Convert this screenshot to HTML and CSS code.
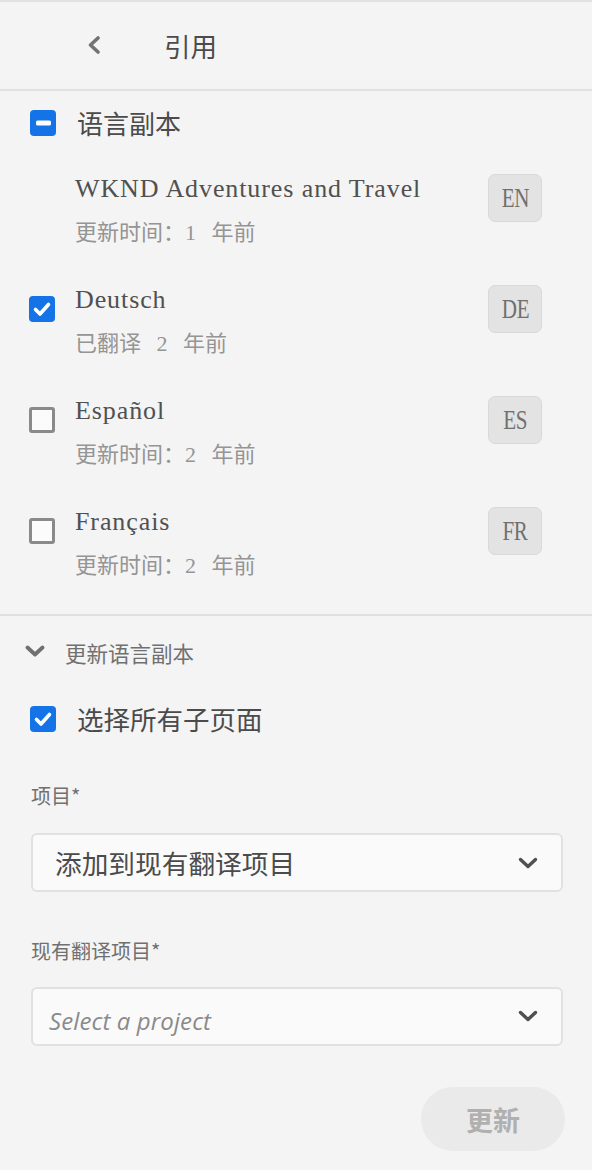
FILE: index.html
```html
<!DOCTYPE html>
<html lang="zh">
<head>
<meta charset="utf-8">
<title>引用</title>
<link rel="stylesheet" href="styles.css">
</head>
<body>
<div class="panel">
  <header class="header">
    <button class="back" aria-label="返回">
      <svg width="16" height="18" viewBox="0 0 16 18"><path d="M12 2 L4.5 9 L12 16" fill="none" stroke="#737373" stroke-width="3.6" stroke-linecap="round" stroke-linejoin="round"/></svg>
    </button>
    <h1 class="title">引用</h1>
  </header>

  <section class="copies">
    <div class="group-head">
      <span class="cb cb-on"><svg width="26" height="26" viewBox="0 0 26 26"><rect x="6" y="10.5" width="15" height="5" rx="1.5" fill="#fff"/></svg></span>
      <span class="group-title">语言副本</span>
    </div>
    <ul class="list">
      <li class="row">
        <span class="slot"></span>
        <div class="info"><div class="name">WKND Adventures and Travel</div><div class="meta">更新时间：1 年前</div></div>
        <span class="badge"><span>EN</span></span>
      </li>
      <li class="row">
        <span class="slot"><span class="cb cb-on"><svg width="26" height="26" viewBox="0 0 26 26"><path d="M6.5 13.5 L11 18 L19.5 8.5" fill="none" stroke="#fff" stroke-width="3.6" stroke-linecap="round" stroke-linejoin="round"/></svg></span></span>
        <div class="info"><div class="name">Deutsch</div><div class="meta">已翻译 2 年前</div></div>
        <span class="badge"><span>DE</span></span>
      </li>
      <li class="row">
        <span class="slot"><span class="cb cb-off"></span></span>
        <div class="info"><div class="name">Español</div><div class="meta">更新时间：2 年前</div></div>
        <span class="badge"><span>ES</span></span>
      </li>
      <li class="row">
        <span class="slot"><span class="cb cb-off"></span></span>
        <div class="info"><div class="name">Français</div><div class="meta">更新时间：2 年前</div></div>
        <span class="badge"><span>FR</span></span>
      </li>
    </ul>
  </section>

  <section class="update">
    <div class="toggle">
      <svg width="20" height="12" viewBox="0 0 20 12"><path d="M2.5 2.5 L10 9.5 L17.5 2.5" fill="none" stroke="#707070" stroke-width="3.8" stroke-linecap="round" stroke-linejoin="round"/></svg>
      <span>更新语言副本</span>
    </div>
    <div class="select-all">
      <span class="cb cb-on"><svg width="26" height="26" viewBox="0 0 26 26"><path d="M6.5 13.5 L11 18 L19.5 8.5" fill="none" stroke="#fff" stroke-width="3.6" stroke-linecap="round" stroke-linejoin="round"/></svg></span>
      <span class="select-all-text">选择所有子页面</span>
    </div>

    <div class="field">
      <div class="label">项目*</div>
      <div class="dropdown">
        <span class="value">添加到现有翻译项目</span>
        <svg class="caret" width="20" height="12" viewBox="0 0 20 12"><path d="M2.5 2.5 L10 9.5 L17.5 2.5" fill="none" stroke="#505050" stroke-width="3.4" stroke-linecap="round" stroke-linejoin="round"/></svg>
      </div>
    </div>

    <div class="field field-2">
      <div class="label">现有翻译项目*</div>
      <div class="dropdown dropdown-placeholder">
        <span class="placeholder">Select a project</span>
        <svg class="caret" width="20" height="12" viewBox="0 0 20 12"><path d="M2.5 2.5 L10 9.5 L17.5 2.5" fill="none" stroke="#505050" stroke-width="3.4" stroke-linecap="round" stroke-linejoin="round"/></svg>
      </div>
    </div>

    <div class="actions">
      <button class="btn-update" disabled>更新</button>
    </div>
  </section>
</div>
</body>
</html>
```

FILE: styles.css
```css
* { box-sizing: border-box; }

html, body {
  margin: 0;
  padding: 0;
  background: #f4f4f4;
}

body {
  font-family: "Noto Sans CJK SC", "Noto Sans", sans-serif;
  color: #4b4b4b;
}

.panel {
  width: 592px;
  min-height: 1170px;
  border-top: 2px solid #e2e2e2;
}

.header {
  height: 89px;
  display: flex;
  align-items: center;
  padding-left: 86px;
  border-bottom: 2px solid #e1e1e1;
}

.back {
  background: none;
  border: 0;
  padding: 0;
  width: 16px;
  height: 18px;
  display: flex;
  margin-right: 62px;
  margin-top: -2px;
}

.title {
  margin: 0;
  font-size: 26.5px;
  font-weight: 400;
  color: #4b4b4b;
  line-height: 30px;
}

.copies {
  padding-top: 19px;
  padding-bottom: 4px;
  border-bottom: 2px solid #e0e0e0;
}

.group-head {
  display: flex;
  align-items: center;
  height: 26px;
  padding-left: 30px;
}

.group-title {
  margin-left: 21px;
  font-size: 26px;
  line-height: 30px;
  color: #4b4b4b;
}

.cb {
  width: 26px;
  height: 26px;
  border-radius: 4px;
  display: inline-flex;
  flex: none;
}

.cb-on {
  background: #1473e6;
}

.cb-off {
  border: 3px solid #8a8a8a;
  background: #fbfbfb;
  border-radius: 3px;
  width: 26px;
  height: 26px;
}

.list {
  list-style: none;
  margin: 30px 0 0;
  padding: 0;
}

.row {
  height: 111px;
  display: grid;
  grid-template-columns: 46px 1fr 54px;
  align-items: start;
  padding-left: 29px;
  padding-right: 50px;
}

.slot {
  margin-top: 19px;
  display: flex;
}

.info {
  margin-top: 8px;
}

.name {
  font-family: "Liberation Serif", "Noto Sans CJK SC", serif;
  font-size: 26px;
  line-height: 30px;
  letter-spacing: 0.9px;
  color: #505050;
  white-space: nowrap;
}

.meta {
  margin-top: 15px;
  font-family: "Liberation Serif", "Noto Sans CJK SC", serif;
  font-size: 22px;
  line-height: 28px;
  word-spacing: 10px;
  color: #959595;
  white-space: nowrap;
}

.badge {
  margin-top: 8px;
  width: 54px;
  height: 48px;
  border-radius: 7px;
  background: #e3e3e3;
  border: 1px solid #d9d9d9;
  display: flex;
  align-items: center;
  justify-content: center;
}

.badge span {
  font-family: "Liberation Serif", serif;
  font-size: 27px;
  color: #707070;
  display: inline-block;
  transform: scaleX(0.78);
  letter-spacing: -0.5px;
}

.update {
  padding-top: 24px;
}

.toggle {
  display: flex;
  align-items: center;
  height: 26px;
  padding-left: 25px;
}

.toggle svg {
  margin-top: -4px;
}

.toggle span {
  margin-left: 20px;
  font-size: 21.5px;
  line-height: 26px;
  color: #707070;
}

.select-all {
  margin-top: 40px;
  display: flex;
  align-items: center;
  height: 26px;
  padding-left: 30px;
}

.select-all-text {
  margin-left: 21px;
  font-size: 26.5px;
  line-height: 30px;
  color: #4b4b4b;
}

.field {
  margin-top: 50px;
  padding-left: 31px;
  padding-right: 29px;
}

.field-2 {
  margin-top: 45px;
}

.label {
  font-size: 20px;
  line-height: 28px;
  color: #707070;
}

.dropdown {
  margin-top: 23px;
  height: 59px;
  border: 2px solid #e1e1e1;
  border-radius: 6px;
  background: #fafafa;
  display: flex;
  align-items: center;
  justify-content: space-between;
  padding: 0 23px 0 22px;
}

.field-2 .dropdown {
  margin-top: 22px;
}

.value {
  font-size: 26.7px;
  line-height: 30px;
  color: #4b4b4b;
}

.caret {
  flex: none;
}

.dropdown-placeholder {
  align-items: flex-start;
}

.dropdown-placeholder .caret {
  margin-top: 21px;
}

.placeholder {
  margin-top: 16px;
  margin-left: -6px;
  font-family: "Open Sans", "Noto Sans", sans-serif;
  font-style: italic;
  font-size: 24px;
  line-height: 32px;
  color: #8a8a8a;
  letter-spacing: 0.1px;
}

.actions {
  margin-top: 41px;
  display: flex;
  justify-content: flex-end;
  padding-right: 27px;
}

.btn-update {
  width: 144px;
  height: 64px;
  border-radius: 32px;
  border: 0;
  background: #eaeaea;
  color: #b0b0b0;
  font-family: "Noto Sans CJK SC", sans-serif;
  font-weight: 700;
  font-size: 27px;
  padding: 0;
}
```
